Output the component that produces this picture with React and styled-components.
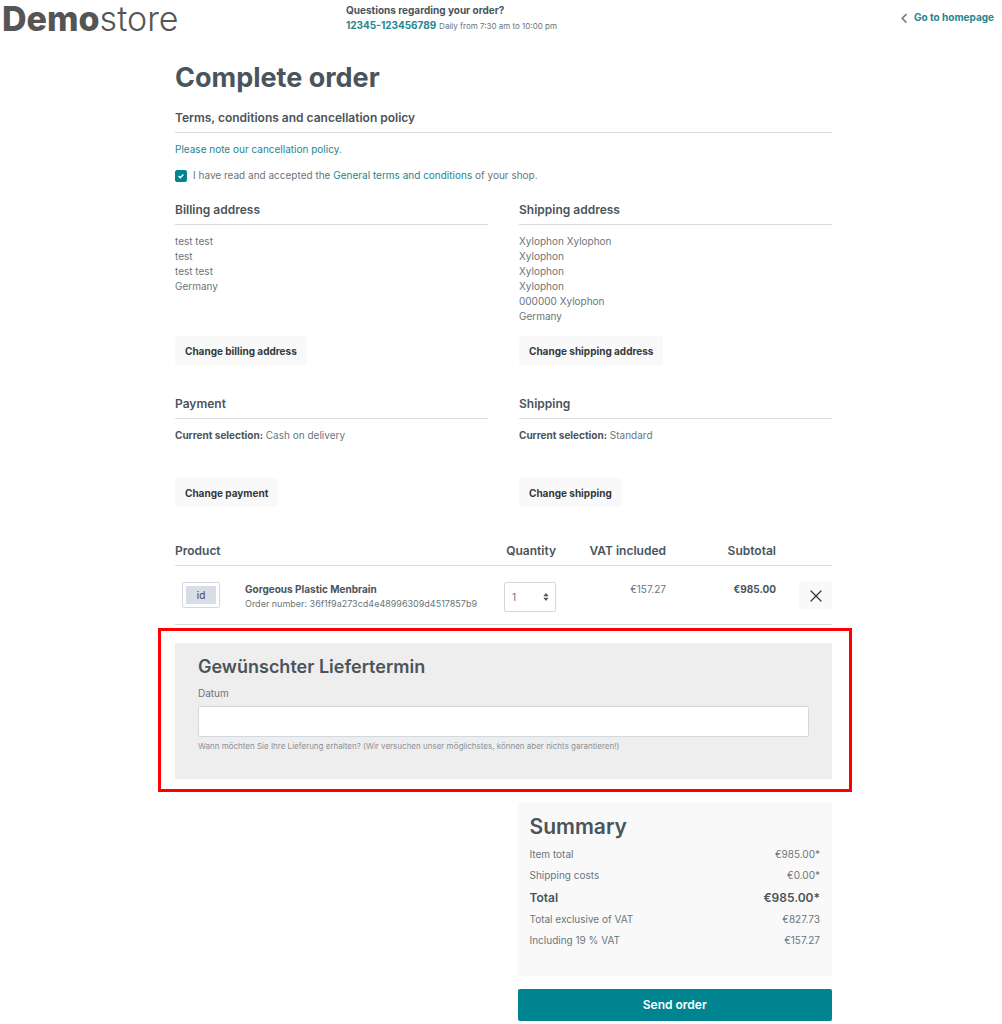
import React, { useState } from 'react'
import styled, { createGlobalStyle } from 'styled-components'

const billing = ['test test', 'test', 'test test', 'Germany']
const shipping = ['Xylophon Xylophon', 'Xylophon', 'Xylophon', 'Xylophon', '000000 Xylophon', 'Germany']

const totals = [
    { label: 'Item total', value: '€985.00*' },
    { label: 'Shipping costs', value: '€0.00*' },
    { label: 'Total', value: '€985.00*', strong: true },
    { label: 'Total exclusive of VAT', value: '€827.73' },
    { label: 'Including 19 % VAT', value: '€157.27' },
]

function Header() {
    return (
        <Top>
            <Logo href="#"><b>Demo</b>store</Logo>
            <Hotline>
                <strong>Questions regarding your order?</strong>
                <div>
                    <Phone href="tel:12345123456789">12345-123456789</Phone> <small>Daily from 7:30 am to 10:00 pm</small>
                </div>
            </Hotline>
            <Home href="#">
                <svg width="6" height="10" viewBox="0 0 6 10" fill="none" stroke="#7d8185" strokeWidth="1.7" strokeLinecap="round" strokeLinejoin="round">
                    <path d="M4.9 1.6L1.2 5.4l3.7 3.7" />
                </svg>
                Go to homepage
            </Home>
        </Top>
    )
}

function InfoCard({ title, button, tall, children }) {
    return (
        <section>
            <SectionTitle>{title}</SectionTitle>
            <CardBody $tall={tall}>{children}</CardBody>
            <LightButton type="button">{button}</LightButton>
        </section>
    )
}

function Products() {
    return (
        <Table>
            <colgroup>
                <col width="70" />
                <col />
                <col width="52" />
                <col width="110" />
                <col width="110" />
                <col width="56" />
            </colgroup>
            <thead>
                <tr>
                    <Th colSpan="2">Product</Th>
                    <Th $align="right">Quantity</Th>
                    <Th $align="right">VAT included</Th>
                    <Th $align="right">Subtotal</Th>
                    <Th />
                </tr>
            </thead>
            <tbody>
                <tr>
                    <Td><Thumb><span>id</span></Thumb></Td>
                    <Td>
                        <strong>Gorgeous Plastic Menbrain</strong>
                        <OrderNumber>Order number: 36f1f9a273cd4e48996309d4517857b9</OrderNumber>
                    </Td>
                    <Td>
                        <Quantity>
                            <select aria-label="Quantity" defaultValue="1">
                                <option>1</option>
                                <option>2</option>
                                <option>3</option>
                            </select>
                            <svg width="6" height="8" viewBox="0 0 6 8" fill="#4a545b">
                                <path d="M3 0l2.6 3.3H.4zM3 8l2.6-3.3H.4z" />
                            </svg>
                        </Quantity>
                    </Td>
                    <Td $align="right">€157.27</Td>
                    <Td $align="right"><strong>€985.00</strong></Td>
                    <Td $align="right">
                        <RemoveButton type="button" aria-label="Remove product">
                            <svg width="12" height="12" viewBox="0 0 12 12" stroke="#2b3136" strokeWidth="1.2" strokeLinecap="round">
                                <path d="M1 1l10 10M11 1L1 11" />
                            </svg>
                        </RemoveButton>
                    </Td>
                </tr>
            </tbody>
        </Table>
    )
}

function App() {
    const [accepted, setAccepted] = useState(true)

    return (
        <>
            <GlobalStyle />
            <Header />
            <Main>
                <Title>Complete order</Title>

                <SectionTitle>Terms, conditions and cancellation policy</SectionTitle>
                <Terms>
                    <a href="#">Please note our cancellation policy.</a>
                    <Accept>
                        <Check>
                            <input id="tos" type="checkbox" checked={accepted} onChange={e => setAccepted(e.target.checked)} />
                            <svg width="6" height="6" viewBox="0 0 6 6" fill="none" stroke="#fff" strokeWidth="1.4">
                                <path d="M.6 3l1.7 1.7L5.4 1.4" />
                            </svg>
                        </Check>
                        <label htmlFor="tos">
                            I have read and accepted the <a href="#">General terms and conditions</a> of your shop.
                        </label>
                    </Accept>
                </Terms>

                <Cards>
                    <InfoCard title="Billing address" button="Change billing address" tall>
                        {billing.map((line, i) => <div key={i}>{line}</div>)}
                    </InfoCard>
                    <InfoCard title="Shipping address" button="Change shipping address" tall>
                        {shipping.map((line, i) => <div key={i}>{line}</div>)}
                    </InfoCard>
                    <InfoCard title="Payment" button="Change payment">
                        <strong>Current selection:</strong> Cash on delivery
                    </InfoCard>
                    <InfoCard title="Shipping" button="Change shipping">
                        <strong>Current selection:</strong> Standard
                    </InfoCard>
                </Cards>

                <Products />

                <Highlight>
                    <Delivery>
                        <h2>Gewünschter Liefertermin</h2>
                        <label htmlFor="date">Datum</label>
                        <input id="date" type="text" />
                        <small>Wann möchten Sie Ihre Lieferung erhalten? (Wir versuchen unser möglichstes, können aber nichts garantieren!)</small>
                    </Delivery>
                </Highlight>

                <Aside>
                    <Summary>
                        <h2>Summary</h2>
                        <dl>
                            {totals.map(row => (
                                <SummaryRow key={row.label} $strong={row.strong}>
                                    <dt>{row.label}</dt>
                                    <dd>{row.value}</dd>
                                </SummaryRow>
                            ))}
                        </dl>
                    </Summary>
                    <SendButton type="button">Send order</SendButton>
                </Aside>
            </Main>
        </>
    )
}

export default App

const GlobalStyle = createGlobalStyle`
    * {
        box-sizing: border-box;
    }

    body {
        margin: 0;
        background: #fff;
        color: #6b757c;
        font-family: Inter, "Liberation Sans", sans-serif;
        font-size: 10px;
        line-height: 15px;
    }

    h1, h2, dl, dd {
        margin: 0;
    }

    h1, h2, strong {
        color: #4a545b;
        font-weight: 700;
    }

    h2 {
        font-weight: 600;
    }

    a {
        color: #24868e;
        text-decoration: none;
    }

    button, input, select {
        font: inherit;
    }
`

const Top = styled.header`
    display: grid;
    grid-template-columns: 344px 1fr auto;
    align-items: start;
    padding: 3px 8px 0 2px;
`

const Logo = styled.a`
    color: #555;
    font-size: 34px;
    line-height: 32px;
    font-weight: 300;

    b {
        font-weight: 800;
    }
`

const Hotline = styled.div`
    small {
        font-size: 8px;
    }
`

const Phone = styled.a`
    font-weight: 700;
`

const Home = styled.a`
    display: flex;
    align-items: center;
    gap: 7px;
    padding-top: 7px;
    font-weight: 700;
`

const Main = styled.main`
    box-sizing: content-box;
    max-width: 657px;
    margin: 0 auto;
    padding: 27px 0 3px 5px;
`

const Title = styled.h1`
    margin-bottom: 15px;
    font-size: 27px;
    line-height: 32px;
`

const SectionTitle = styled.h2`
    padding-bottom: 5px;
    border-bottom: 1px solid #d9dddd;
    font-size: 12px;
    line-height: 18px;
`

const Terms = styled.div`
    padding: 9px 0 18px;
`

const Accept = styled.div`
    display: flex;
    align-items: center;
    gap: 6px;
    margin-top: 11px;
`

const Check = styled.span`
    display: grid;
    place-items: center;

    > * {
        grid-area: 1 / 1;
    }

    input {
        appearance: none;
        width: 12px;
        height: 12px;
        margin: 0;
        border: 1px solid #798490;
        border-radius: 2px;
    }

    input:checked {
        background: #008490;
        border-color: #008490;
    }

    svg {
        pointer-events: none;
    }
`

const Cards = styled.div`
    display: grid;
    grid-template-columns: 1fr 1fr;
    gap: 30px 31px;
`

const CardBody = styled.div`
    min-height: ${props => (props.$tall ? '102px' : '50px')};
    margin-top: 9px;
`

const LightButton = styled.button`
    height: 29px;
    padding: 1px 10px 0;
    border: 0;
    border-radius: 2px;
    background: #f9f9f9;
    color: #33393e;
    font-weight: 700;
`

const Table = styled.table`
    width: 100%;
    margin-top: 35px;
    border-collapse: collapse;
    table-layout: fixed;
`

const Th = styled.th`
    padding: 0 0 5px;
    border-bottom: 1px solid #d9dddd;
    color: #4a545b;
    font-size: 12px;
    line-height: 18px;
    font-weight: 600;
    text-align: ${props => props.$align || 'left'};
    white-space: nowrap;
`

const Td = styled.td`
    padding: 16px 0 12px;
    border-bottom: 1px solid #d9dddd;
    text-align: ${props => props.$align || 'left'};
    vertical-align: top;
`

const Thumb = styled.div`
    width: 38px;
    height: 26px;
    margin-left: 7px;
    padding: 3px;
    border: 1px solid #d5d9dd;
    border-radius: 2px;

    span {
        display: flex;
        align-items: center;
        justify-content: center;
        height: 100%;
        background: #d9dde6;
        color: #444;
    }
`

const OrderNumber = styled.div`
    font-size: 9px;
    line-height: 14px;
`

const Quantity = styled.div`
    display: grid;
    align-items: center;

    > * {
        grid-area: 1 / 1;
    }

    select {
        appearance: none;
        width: 100%;
        height: 30px;
        padding: 0 7px;
        border: 1px solid #d1d9e0;
        border-radius: 2px;
        background: #fff;
        color: #6b757c;
    }

    svg {
        justify-self: end;
        margin-right: 7px;
        pointer-events: none;
    }
`

const RemoveButton = styled.button`
    display: inline-flex;
    align-items: center;
    justify-content: center;
    width: 33px;
    height: 27px;
    padding: 0;
    border: 0;
    background: #f9f9f9;
`

const Highlight = styled.div`
    margin: 3px -20px 10px -17px;
    padding: 12px 17px 10px 14px;
    border: 3px solid #fe0000;
`

const Delivery = styled.section`
    display: flex;
    flex-direction: column;
    padding: 12px 23px 26px;
    background: #eee;

    h2 {
        margin-bottom: 7px;
        font-size: 18px;
        line-height: 24px;
    }

    input {
        height: 31px;
        margin: 5px 0 2px;
        padding: 0 8px;
        border: 1px solid #d1d9e0;
        border-radius: 2px;
        background: #fff;
    }

    small {
        color: #8b9098;
        font-size: 8px;
        line-height: 14px;
    }
`

const Aside = styled.div`
    width: calc(50% - 14px);
    margin-left: auto;
`

const Summary = styled.section`
    margin-bottom: 13px;
    padding: 11px 12px 25px;
    background: #f9f9f9;

    h2 {
        margin-bottom: 3px;
        font-size: 21px;
        line-height: 28px;
    }
`

const SummaryRow = styled.div`
    display: flex;
    justify-content: space-between;
    line-height: 21px;

    ${props => props.$strong && `
        color: #4a545b;
        font-size: 12px;
        line-height: 23px;
        font-weight: 600;
    `}
`

const SendButton = styled.button`
    width: 100%;
    height: 32px;
    padding: 0 0 2px;
    border: 0;
    border-radius: 2px;
    background: #008490;
    color: #fff;
    font-size: 12px;
    font-weight: 600;
`
